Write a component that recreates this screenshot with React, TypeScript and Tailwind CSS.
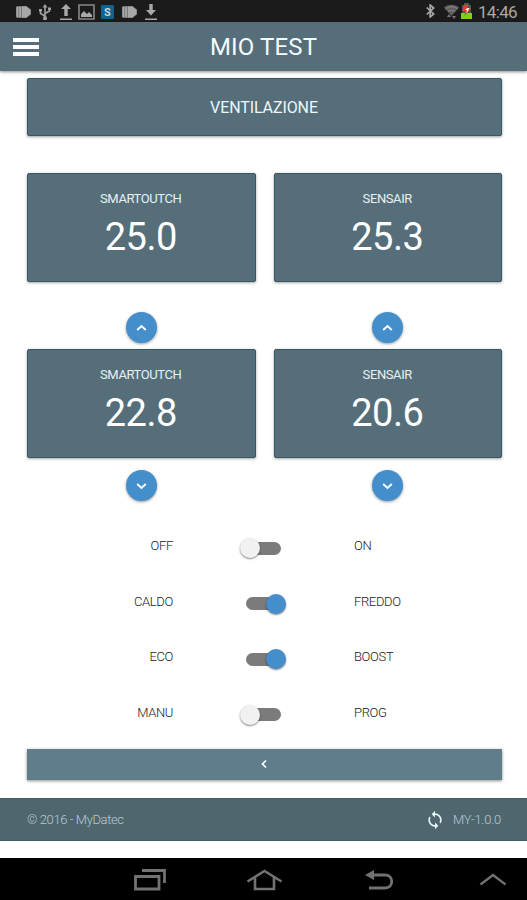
import React from 'react';
import { MdSync } from 'react-icons/md';

interface ReadingProps {
  label: string;
  value: string;
}

interface Option {
  left: string;
  right: string;
  on: boolean;
}

const MEASURED: ReadingProps[] = [
  { label: 'SMARTOUTCH', value: '25.0' },
  { label: 'SENSAIR', value: '25.3' },
];

const SETPOINTS: ReadingProps[] = [
  { label: 'SMARTOUTCH', value: '22.8' },
  { label: 'SENSAIR', value: '20.6' },
];

const OPTIONS: Option[] = [
  { left: 'OFF', right: 'ON', on: false },
  { left: 'CALDO', right: 'FREDDO', on: true },
  { left: 'ECO', right: 'BOOST', on: true },
  { left: 'MANU', right: 'PROG', on: false },
];

const TagIcon = () => (
  <svg width="15" height="12" viewBox="0 0 15 12">
    <path d="M1 0h9.500L15 3.500v5L10.500 12H1L0 11V1z" fill="#777" />
    <path d="M.5 1h1.800v10H.5zM3.200 1H5v10H3.200zM6 .5h4.200l4.300 3.500v4l-4.300 3.500H6z" fill="#a8a8a8" />
  </svg>
);

const StatusBar = () => (
  <div className="h-[22px] bg-[#1b1b1b] flex items-center justify-between pl-4 pr-[10px]">
    <div className="flex items-center pt-0.5">
      <TagIcon />
      <svg className="ml-2" width="12" height="16" viewBox="0 0 12 16" fill="none" stroke="#a2a2a2" strokeWidth="1.600">
        <path d="M6 2v12M6 12L1.500 9.500V6M6 9.500l4.500-2.500V4" />
        <path d="M6 0l2.500 3.500h-5zM4.200 12.500h3.600V16H4.200zM0 5h3v2.500H0zM9 3.500h3V6H9z" fill="#a2a2a2" stroke="none" />
      </svg>
      <svg className="ml-[9px]" width="12" height="16" viewBox="0 0 12 16" fill="#a8a8a8">
        <path d="M6 0l5 5H7.700v7H4.300V5H1zM0 14.500h12V16H0z" />
      </svg>
      <svg className="ml-1.5" width="17" height="16" viewBox="0 0 17 16">
        <path d="M1 1h15v14H1z" fill="none" stroke="#888" strokeWidth="1.600" />
        <path d="M3 13v-3l3-3 3 3 2-2 3 3v2z" fill="#a8a8a8" />
      </svg>
      <div className="ml-1.5 w-[13px] h-[14px] rounded-[1px] bg-[#11628c] flex items-center justify-center text-[11px] leading-none font-bold text-[#c5d4dc]">
        S
      </div>
      <div className="ml-2">
        <TagIcon />
      </div>
      <svg className="ml-2" width="12" height="16" viewBox="0 0 12 16" fill="#a8a8a8">
        <path d="M4.300 0h3.400v6H11l-5 5.500L1 6h3.300zM0 14.500h12V16H0z" />
      </svg>
    </div>
    <div className="flex items-center">
      <svg width="9" height="14" viewBox="0 0 9 14" fill="none" stroke="#a8a8a8" strokeWidth="1.700">
        <path d="M.7 3.500l7 6.500-3.500 3V1l3.500 3-7 6.500" />
      </svg>
      <svg className="ml-[9px]" width="15" height="15" viewBox="0 0 15 15" fill="none">
        <path d="M0 3.500C4-.2 11-.2 15 3.500L7.500 12z" fill="#606060" />
        <path d="M1.500 5c3.500-3 8.500-3 12 0M4 7.700c2-1.700 5-1.700 7 0" stroke="#888" />
        <path d="M5 10l-2 3h4zM10 15l-2-3h4z" fill="#777" />
      </svg>
      <svg className="ml-[2px]" width="11" height="16" viewBox="0 0 11 16">
        <path d="M3 0h5v2h2v8H1V2h2z" fill="#555" />
        <path d="M0 10h11v6H0z" fill="#82cf1c" />
        <path d="M3 2h4.500L6 5.500h4L3.500 13l1-5H1.500z" fill="#e83d2c" />
        <path d="M6.500 5h2l-3 5.500.3-3.500H4z" fill="#fff" />
      </svg>
      <span className="ml-1.5 w-[39px] pt-0.5 text-[17px] leading-none text-[#a9a9a9] tracking-[-0.7px]">14:46</span>
    </div>
  </div>
);

const ReadingCard: React.FC<ReadingProps> = ({ label, value }) => (
  <div className="h-[109px] rounded-[2px] border border-[#365766] bg-[#556e79] shadow-[0_1px_3px_rgba(0,0,0,0.35)] flex flex-col items-center pr-px text-white">
    <span className="mt-[17px] text-[13px] leading-4 tracking-[-0.4px] text-[#e5f0f6]">{label}</span>
    <span className="mt-2 text-[38px] leading-[44px] tracking-[-0.5px]">{value}</span>
  </div>
);

const StepButton = ({ up = false }: { up?: boolean }) => (
  <button className="size-[31px] rounded-full bg-[#448fcb] shadow-[0_1px_3px_rgba(0,0,0,0.4)] flex items-center justify-center justify-self-center">
    <svg width="11" height="8" viewBox="0 0 11 8" fill="none" stroke="#fff" strokeWidth="1.900">
      <path d={up ? 'M1.200 6l4.300-4 4.300 4' : 'M1.200 2l4.300 4 4.300-4'} />
    </svg>
  </button>
);

const Toggle = ({ on }: { on: boolean }) => (
  <div className={`w-[35px] h-[13px] rounded-full bg-[#7b7b7b] flex items-center ${on ? 'justify-end' : 'justify-start'}`}>
    <div
      className={`size-5 shrink-0 rounded-full shadow-[0_1px_2px_rgba(0,0,0,0.5)] ${
        on ? 'bg-[#448fcb] -mr-[5px]' : 'bg-[#f1f1f1] -ml-[6px]'
      }`}
    />
  </div>
);

const NavBar = () => (
  <div className="h-[42px] bg-black flex items-center pl-[134px] pt-0.5">
    <svg width="32" height="22" viewBox="0 0 32 22" fill="none" stroke="#727272" strokeWidth="2.800">
      <path d="M1.500 7.500h23.500v12.500H1.500zM8 1.500h22.500V14" />
    </svg>
    <svg className="ml-[80px]" width="37" height="22" viewBox="0 0 37 22" fill="none" stroke="#727272" strokeWidth="2.600">
      <path d="M1.500 12.500L18.500 2l17 10.500M9 8v12h19V8" />
    </svg>
    <svg className="ml-[82px]" width="29" height="22" viewBox="0 0 29 22" fill="none" stroke="#727272" strokeWidth="2.800">
      <path d="M7 6h13c9 0 9 13 0 13H4" />
      <path d="M0 6l9-5v10z" fill="#727272" stroke="none" />
    </svg>
    <svg className="ml-[85px]" width="28" height="14" viewBox="0 0 28 14" fill="none" stroke="#727272" strokeWidth="2.200">
      <path d="M1.500 11.500L14 2l12.500 9.500" />
    </svg>
  </div>
);

const App: React.FC = () => {
  return (
    <div className="w-[527px] h-[900px] overflow-hidden bg-white font-[Roboto,sans-serif] flex flex-col">
      <StatusBar />

      <header className="h-[49px] shrink-0 bg-[#556e79] shadow-[0_1px_3px_rgba(0,0,0,0.45)] grid grid-cols-[1fr_auto_1fr] items-center px-[13px]">
        <div className="w-[26px] flex flex-col gap-[3px]">
          <span className="h-[4px] bg-white" />
          <span className="h-[4px] bg-white" />
          <span className="h-[4px] bg-white" />
        </div>
        <h1 className="text-2xl leading-none text-[#f3fbff] tracking-[0.15px]">MIO TEST</h1>
      </header>

      <main className="h-[727px] shrink-0 pl-[27px] pr-[25px] pt-[7px]">
        <button className="w-full h-[58px] pt-0.5 pr-px rounded-[2px] border border-[#365766] bg-[#556e79] shadow-[0_1px_3px_rgba(0,0,0,0.4)] text-base tracking-[-0.1px] text-[#edf8fd] block">
          VENTILAZIONE
        </button>

        <div className="mt-[37px] grid grid-cols-2 gap-x-[18px]">
          {MEASURED.map((item) => (
            <ReadingCard key={item.label} {...item} />
          ))}
        </div>

        <div className="mt-[30px] grid grid-cols-2 gap-x-[18px]">
          <StepButton up />
          <StepButton up />
        </div>
        <div className="mt-1.5 grid grid-cols-2 gap-x-[18px]">
          {SETPOINTS.map((item) => (
            <ReadingCard key={item.label} {...item} />
          ))}
        </div>
        <div className="mt-3 grid grid-cols-2 gap-x-[18px]">
          <StepButton />
          <StepButton />
        </div>

        <div className="mt-[19px]">
          {OPTIONS.map((option) => (
            <div
              key={option.left}
              className="h-[55.5px] grid grid-cols-[146px_181px_1fr] items-center text-[13px] tracking-[-0.35px] text-[#222] font-light"
            >
              <span className="text-right -mt-[4px]">{option.left}</span>
              <div className="flex justify-center pt-px">
                <Toggle on={option.on} />
              </div>
              <span className="-mt-[4px]">{option.right}</span>
            </div>
          ))}
        </div>

        <button className="mt-[7px] w-full h-[31px] pr-0.5 pb-px bg-[#607d8b] shadow-[0_1px_3px_rgba(0,0,0,0.45)] flex items-center justify-center">
          <svg width="6" height="10" viewBox="0 0 6 10" fill="none" stroke="#fff" strokeWidth="1.700">
            <path d="M5 1.500L1.500 5 5 8.500" />
          </svg>
        </button>
      </main>

      <footer className="h-[43px] shrink-0 bg-[#50666f] border-y border-[#405b67] pl-[27px] pr-[26px] flex items-center justify-between text-[13px] text-[#b5cbd4] font-light">
        <span className="tracking-[-0.4px]">© 2016 - MyDatec</span>
        <div className="flex items-center gap-2 pt-px">
          <MdSync size={20} color="#e5f5fb" />
          <span className="tracking-[-0.25px]">MY-1.0.0</span>
        </div>
      </footer>

      <div className="flex-1" />
      <NavBar />
    </div>
  );
};

export default App;
